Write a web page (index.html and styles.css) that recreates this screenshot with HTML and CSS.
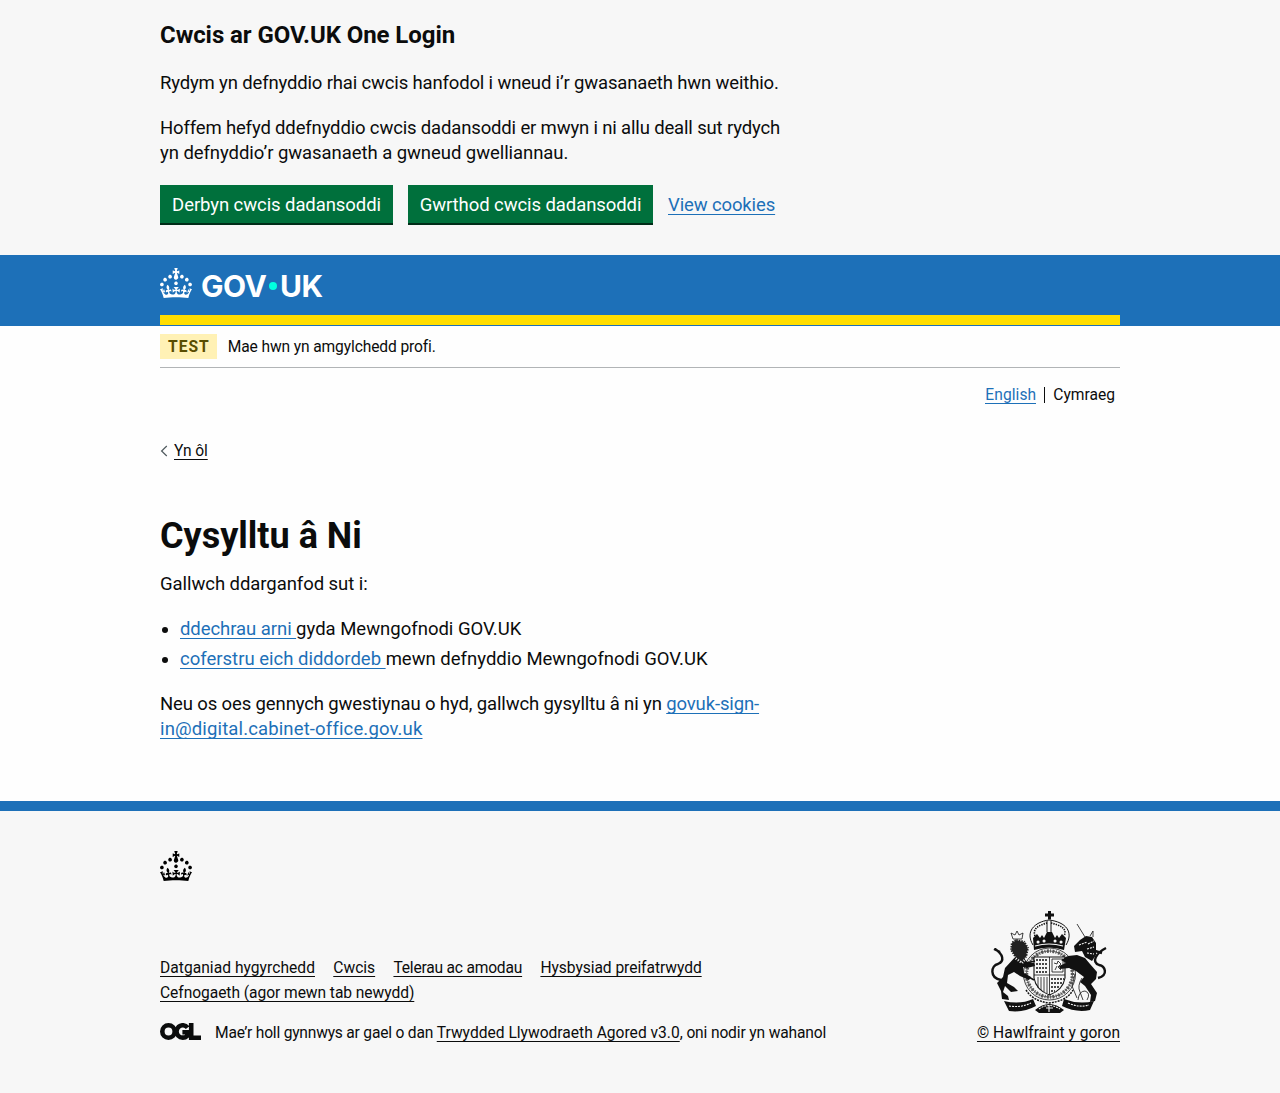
FILE: index.html
```html
<!DOCTYPE html>
<html lang="cy">
<head>
<meta charset="utf-8">
<title>Cysylltu â Ni - GOV.UK One Login</title>
<link rel="stylesheet" href="styles.css">
</head>
<body>
<svg width="0" height="0" class="sprite" aria-hidden="true">
<symbol id="crown" viewBox="0 0 32 30"><path d="M22.6 10.4c-1 .4-2-.1-2.4-1-.4-.9.1-2 1-2.4.9-.4 2 .1 2.4 1s-.1 2-1 2.4m-5.9 6.7c-.9.4-2-.1-2.4-1-.4-.9.1-2 1-2.4.9-.4 2 .1 2.4 1s-.1 2-1 2.4m10.8-3.7c-1 .4-2-.1-2.4-1-.4-.9.1-2 1-2.4.9-.4 2 .1 2.4 1s0 2-1 2.4m3.3 4.8c-1 .4-2-.1-2.4-1-.4-.9.1-2 1-2.4.9-.4 2 .1 2.4 1s-.1 2-1 2.4M17 4.7l2.3 1.2V2.5l-2.3.7-.2-.2.9-3h-3.4l.9 3-.2.2c-.1.1-2.3-.7-2.3-.7v3.4L15 4.7c.1.1.1.2.2.2l-1.3 4c-.1.2-.1.4-.1.6 0 1.1.8 2 1.9 2.2h.7c1-.2 1.9-1.1 1.9-2.1 0-.2 0-.4-.1-.6l-1.3-4c-.1-.2 0-.2.1-.3m-7.6 5.7c.9.4 2-.1 2.4-1 .4-.9-.1-2-1-2.4-.9-.4-2 .1-2.4 1s0 2 1 2.4m-5 3c.9.4 2-.1 2.4-1 .4-.9-.1-2-1-2.4-.9-.4-2 .1-2.4 1s.1 2 1 2.4m-3.2 4.8c.9.4 2-.1 2.4-1 .4-.9-.1-2-1-2.4-.9-.4-2 .1-2.4 1s0 2 1 2.4m14.8 11c4.4 0 8.6.3 12.3.8 1.1-4.5 2.4-7 3.7-8.8l-2.5-.9c.2 1.3.3 1.9 0 2.7-.4-.4-.8-1.1-1.1-2.3l-1.2 4c.7-.5 1.3-.8 2-.9-1.1 2.5-2.6 3.1-3.5 3-1.1-.2-1.7-1.2-1.5-2.1.3-1.2 1.5-1.5 2.1-.1 1.1-2.3-.8-3-2-2.3 1.9-1.9 2.1-3.5.6-5.6-2.1 1.6-2.1 3.2-1.2 5.5-1.2-1.4-3.2-.6-2.5 1.6.9-1.4 2.1-.5 1.9.8-.2 1.1-1.7 2.1-3.5 1.9-2.7-.2-2.9-2.1-2.9-3.6.7-.1 1.9.5 2.9 1.9l.4-4.3c-1.1 1.1-2.1 1.4-3.2 1.4.4-1.2 2.1-3 2.1-3h-5.4s1.7 1.9 2.1 3c-1.1 0-2.1-.2-3.2-1.4l.4 4.3c1-1.4 2.2-2 2.9-1.9-.1 1.5-.2 3.4-2.9 3.6-1.9.2-3.4-.8-3.5-1.9-.2-1.3 1-2.2 1.9-.8.7-2.3-1.2-3-2.5-1.6.9-2.2.9-3.9-1.2-5.5-1.5 2-1.3 3.7.6 5.6-1.2-.7-3.1 0-2 2.3.6-1.4 1.8-1.1 2.1.1.2.9-.3 1.9-1.5 2.1-.9.2-2.4-.5-3.5-3 .6 0 1.2.3 2 .9l-1.2-4c-.3 1.1-.7 1.9-1.1 2.3-.3-.8-.2-1.4 0-2.7l-2.9.9C1.3 23 2.6 25.5 3.7 30c3.7-.5 7.9-.8 12.3-.8"/></symbol>
</svg>

<section class="cookies">
  <div class="container">
    <div class="measure">
      <h2>Cwcis ar GOV.UK One Login</h2>
      <p class="tight">Rydym yn defnyddio rhai cwcis hanfodol i wneud i’r gwasanaeth hwn weithio.</p>
      <p class="snug"><span class="tight">Hoffem hefyd ddefnyddio cwcis dadansoddi er mwyn i ni allu deall sut rydych</span><br><span class="light">yn defnyddio’r gwasanaeth a gwneud gwelliannau.</span></p>
    </div>
    <div class="actions">
      <button class="btn btn-accept">Derbyn cwcis dadansoddi</button>
      <button class="btn btn-reject">Gwrthod cwcis dadansoddi</button>
      <a class="snug" href="#">View cookies</a>
    </div>
  </div>
</section>

<header class="header">
  <div class="container header-inner">
    <svg class="logo" width="164" height="38" viewBox="0 0 164 38" role="img" aria-label="GOV.UK">
      <use href="#crown" width="32" height="30"/>
      <text x="41" y="29" textLength="66">GOV</text>
      <circle cx="113" cy="18" r="4"/>
      <text x="120" y="29" textLength="43">UK</text>
    </svg>
  </div>
</header>

<div class="container">
  <div class="phase"><strong class="tag">TEST</strong><span class="snug">Mae hwn yn amgylchedd profi.</span></div>
  <nav class="langs"><a href="#">English</a><span>Cymraeg</span></nav>
  <a class="back" href="#"><svg width="8" height="12" viewBox="0 0 8 12"><path d="M6.8 1 1.6 6l5.2 5"/></svg><span>Yn ôl</span></a>
  <main class="main measure">
    <h1>Cysylltu â Ni</h1>
    <p class="light">Gallwch ddarganfod sut i:</p>
    <ul>
      <li><a class="light" href="#">ddechrau arni </a><span>gyda Mewngofnodi GOV.UK</span></li>
      <li><a href="#">coferstru eich diddordeb </a>mewn defnyddio Mewngofnodi GOV.UK</li>
    </ul>
    <p class="snug">Neu os oes gennych gwestiynau o hyd, gallwch gysylltu â ni yn <a class="wider" href="#"><span class="snug">govuk-sign-</span><br>in@digital.cabinet-office.gov.uk</a></p>
  </main>
</div>

<footer class="footer">
  <div class="container">
    <svg class="footer-crown" width="32" height="30"><use href="#crown" width="32" height="30"/></svg>
    <div class="meta">
      <div>
        <ul class="links">
          <li><a class="loose" href="#">Datganiad hygyrchedd</a></li>
          <li><a href="#">Cwcis</a></li>
          <li><a class="tighter" href="#">Telerau ac amodau</a></li>
          <li><a class="light" href="#">Hysbysiad preifatrwydd</a></li>
          <li><a class="light" href="#">Cefnogaeth (agor mewn tab newydd)</a></li>
        </ul>
        <div class="licence">
          <svg class="ogl" width="41" height="17" viewBox="0 0 41 17" role="img" aria-label="OGL">
            <circle cx="8.5" cy="8.5" r="6.2"/>
            <path d="M27.6 4.6A6.2 6.2 0 1 0 27.2 12.8V9.2H22.4M31.2 0V14.7H41"/>
          </svg>
          <span class="tighter">Mae’r holl gynnwys ar gael o dan <a class="plain" href="#">Trwydded Llywodraeth Agored v3.0</a><span class="tight">, oni nodir yn wahanol</span></span>
        </div>
      </div>
      <div class="copyright">
        <svg class="arms" width="118" height="104" viewBox="0 0 118 104" aria-hidden="true">
          <!-- royal crown -->
          <path class="f" d="M58 1h3v2.500h3v3h-3v3h-3v-3h-3v-3h3zM43 28l4-4 3 4 2-3 2 3 3-6h5l3 6 2-3 2 3 3-4 4 4-2 12q-15-5-30 0z"/>
          <path class="s2 thin" d="M43 35C35 22 44 12 59 10c17 2 25 12 17 25"/>
          <path class="s2 thin" d="M57 11v11M61 11v11"/>
          <path class="s dots" d="M45 26C42 18 50 15 57 13M61 13c8 2 17 5 13 13"/>
          <path class="cut" d="M45 36q14-4 28 0"/><path class="cut round" d="M48 32h.1M54 31h.1M65 31h.1M71 32h.1"/>
          <!-- garter and shield -->
          <circle class="garter" cx="59.500" cy="64" r="23"/>
          <circle class="letters" cx="59.500" cy="64" r="23"/>
          <circle class="s" cx="59.500" cy="64" r="26"/>
          <path class="shield" d="M44 47h31v21q-2 12-15.500 17Q46 80 44 68z"/>
          <path class="s" d="M59.500 47v38M44 65h31"/>
          <path class="s2 dash" d="M46 50h12M46 54h12M46 58h12M46 62h12M61 69h13M61 73h12M61 77h9M61 81h4"/>
          <path class="s" d="M62 49h11v13H62zM64 53l3 1 1-3 3 3-3 3 3 3M65 60l2-4M48 67v11M51 67v13M54 67v15M57 67v16"/>
          <!-- lion -->
          <path class="f" d="M27 45l6 2 4 5 7 1 1 3-8 2-4-1 1 6 7 4-2 3-9-4-6-4-6 3-1 8 7 4 4 4-7 1-6-6-2 6 5 4 1 4-7-1-1-8-4-8 6-6 2-9z"/>
          <path class="mane" d="M21 32l5-3 9 2 4 7-2 9-5 6-7-5-5-8z"/>
          <path class="s" d="M23 29l-2-6 4 2 2-4 2 4 4-2-1 6z"/>
          <path class="s3" d="M11 70C-1 68 1 55 8 54c7-3 5-10-3-15M4 39l6 3"/>
          <path class="s2" d="M36 53l9-2M37 66l7 4"/>
          <!-- unicorn -->
          <path class="f" d="M78 46l9-1 8 3 5 6 7 8-1 7-5 5 6 9-2 8-5 1 1-7-6-9-5-4 4-5-8-6-7-3-9 1-1-3 7-3-5-3z"/>
          <path class="f" d="M84 36l6-6 6-4 6 1 4 6v12l-4 6-7-4-3-6-7 1z"/>
          <path class="cut dash" d="M89 35l8-3M98 34l6-3M97 39l7-2M97 43l7 1"/>
          <path class="s" d="M87 14l8 13M100 26l3-5v6M92 68q-5 8-2 14l3 8M88 90q1-9 7-9 6 2 2 9M85 64l-3 12 5 12"/>
          <path class="s3" d="M108 68c11-3 7-12 1-13-8-3-3-12 7-17M105 41l7 2"/>
          <!-- compartment and motto scroll -->
          <path class="s2 dash" d="M36 80q7 11 23 13 18-2 24-13"/>
          <path class="f" d="M14 91q16 4 29-2l3 7q-13 7-27 5zM74 89q15 6 30 2l-4 9q-14 3-28-4zM45 100q14-12 29 0l-4 3H49z"/>
          <path class="cut dash" d="M19 96q12 2 22-3M78 93q11 5 21 2M49 99q10-7 21 0"/>
          <path class="cut" d="M59 95v7M56 98h7"/>
        </svg>
        <a href="#">© Hawlfraint y goron</a>
      </div>
    </div>
  </div>
</footer>
</body>
</html>
```
FILE: styles.css
```css
* { box-sizing: border-box; }
body { margin: 0; background: #fefefe; color: #0b0c0c; font: 18.5px/25px Roboto, "Noto Sans", sans-serif; }
.sprite { position: absolute; }
.container { width: 960px; margin: 0 auto; }
.measure { width: 640px; }
a { color: #1d70b8; text-decoration: underline; text-decoration-thickness: 1px; text-underline-offset: 3px; text-decoration-skip-ink: none; white-space: nowrap; }
li a { white-space: pre-wrap; }
p { margin: 0 0 20px; }
.tighter { letter-spacing: -.21px; }
.tight { letter-spacing: -.155px; }
.snug { letter-spacing: -.125px; }
.light { letter-spacing: -.06px; }
.plain { letter-spacing: 0; }
.loose { letter-spacing: .03px; }
.wider { letter-spacing: .14px; }

.cookies { background: #f7f7f7; padding: 20px 0 30px; }
.cookies h2 { margin: 0 0 21px; font-size: 24px; line-height: 30px; letter-spacing: -.07px; }
.cookies p:last-child { margin-bottom: 19px; }
.actions { display: flex; align-items: center; gap: 15px; height: 40px; }
.btn { height: 38px; margin: 0 0 2px; padding: 2px 0 0; border: 0; background: #00703c; box-shadow: 0 2px 0 #002d18; color: #fff; font: inherit; letter-spacing: -.08px; }
.btn-accept { width: 233px; }
.btn-reject { width: 245px; }

.header { padding-bottom: 1px; background: #1d70b8; }
.header-inner { height: 70px; padding-top: 13px; border-bottom: 10px solid #ffdd00; }
.logo { display: block; overflow: visible; fill: #fff; }
.logo text { font: 700 30px Inter, sans-serif; }
.logo circle { fill: #00ffe0; }

.phase { display: flex; align-items: center; gap: 11px; height: 42px; border-bottom: 1px solid #b1b4b6; font-size: 15.6px; }
.phase span { padding-top: 2px; }
.tag { padding: 1px 7px 0 8px; height: 25px; line-height: 25px; background: #fff1b5; color: #594d00; letter-spacing: 1px; }
.langs { display: flex; justify-content: flex-end; align-items: center; margin-top: 19px; padding-right: 5px; height: 16px; font-size: 15.6px; }
.langs a { padding-right: 8px; background: linear-gradient(#1d70b8, #1d70b8) 0 20px / calc(100% - 8px) 1px no-repeat; letter-spacing: .08px; text-decoration: none; }
.langs span { padding-left: 8px; border-left: 1px solid #0b0c0c; line-height: 16px; }
.back { display: flex; width: max-content; align-items: center; gap: 6px; margin-top: 35px; height: 25px; color: #0b0c0c; font-size: 15.6px; letter-spacing: -.1px; text-decoration: none; }
.back svg { fill: none; stroke: #505a5f; stroke-width: 1.2; }
.back span { padding-top: 2px; text-decoration: underline; text-underline-offset: 3px; text-decoration-thickness: 1px; }

.main { padding-top: 53px; height: 338px; }
h1 { margin: 0 0 16px; font-size: 36px; line-height: 40px; }
.main ul { margin: 0 0 20px; padding-left: 20px; }
.main li { margin-bottom: 5px; }

.footer { height: 292px; padding-top: 40px; border-top: 10px solid #1d70b8; background: #f7f7f7; font-size: 15.6px; }
.footer a { color: #0b0c0c; }
.footer-crown { display: block; }
.meta { display: flex; justify-content: space-between; align-items: flex-end; height: 165px; }
.links { display: flex; flex-wrap: wrap; column-gap: 18.3px; width: 600px; margin: 0 0 15px; padding: 0; list-style: none; }
.licence { display: flex; gap: 14px; align-items: center; height: 25px; }
.ogl { margin-bottom: 4px; fill: none; stroke: #0b0c0c; stroke-width: 4.6; }
.copyright { display: flex; flex-direction: column; align-items: flex-end; }
.arms { margin: 0 12px 7px 0; }
.arms .f { fill: #111; }
.arms .s, .arms .s2, .arms .s3 { fill: none; stroke: #111; stroke-width: .8; }
.arms .s2 { stroke-width: 1.5; }
.arms .s3 { stroke-width: 2.4; }
.arms .thin { stroke-width: 1; }
.arms .dots { stroke-width: 1.6; stroke-dasharray: 1.4 1; }
.arms .dash { stroke-dasharray: 2 1; }
.arms .cut { fill: none; stroke: #f7f7f7; stroke-width: 1.1; }
.arms .round { stroke-width: 3; stroke-linecap: round; }
.arms .garter { fill: #f7f7f7; stroke: #222; stroke-width: .7; }
.arms .letters { fill: none; stroke: #555; stroke-width: 3.5; stroke-dasharray: 1 1.4 2 1.3; }
.arms .shield { fill: #f7f7f7; stroke: #111; stroke-width: 1.1; }
.arms .mane { fill: #222; stroke: #f7f7f7; stroke-width: 2.4; stroke-dasharray: 1 1.6; }
```
